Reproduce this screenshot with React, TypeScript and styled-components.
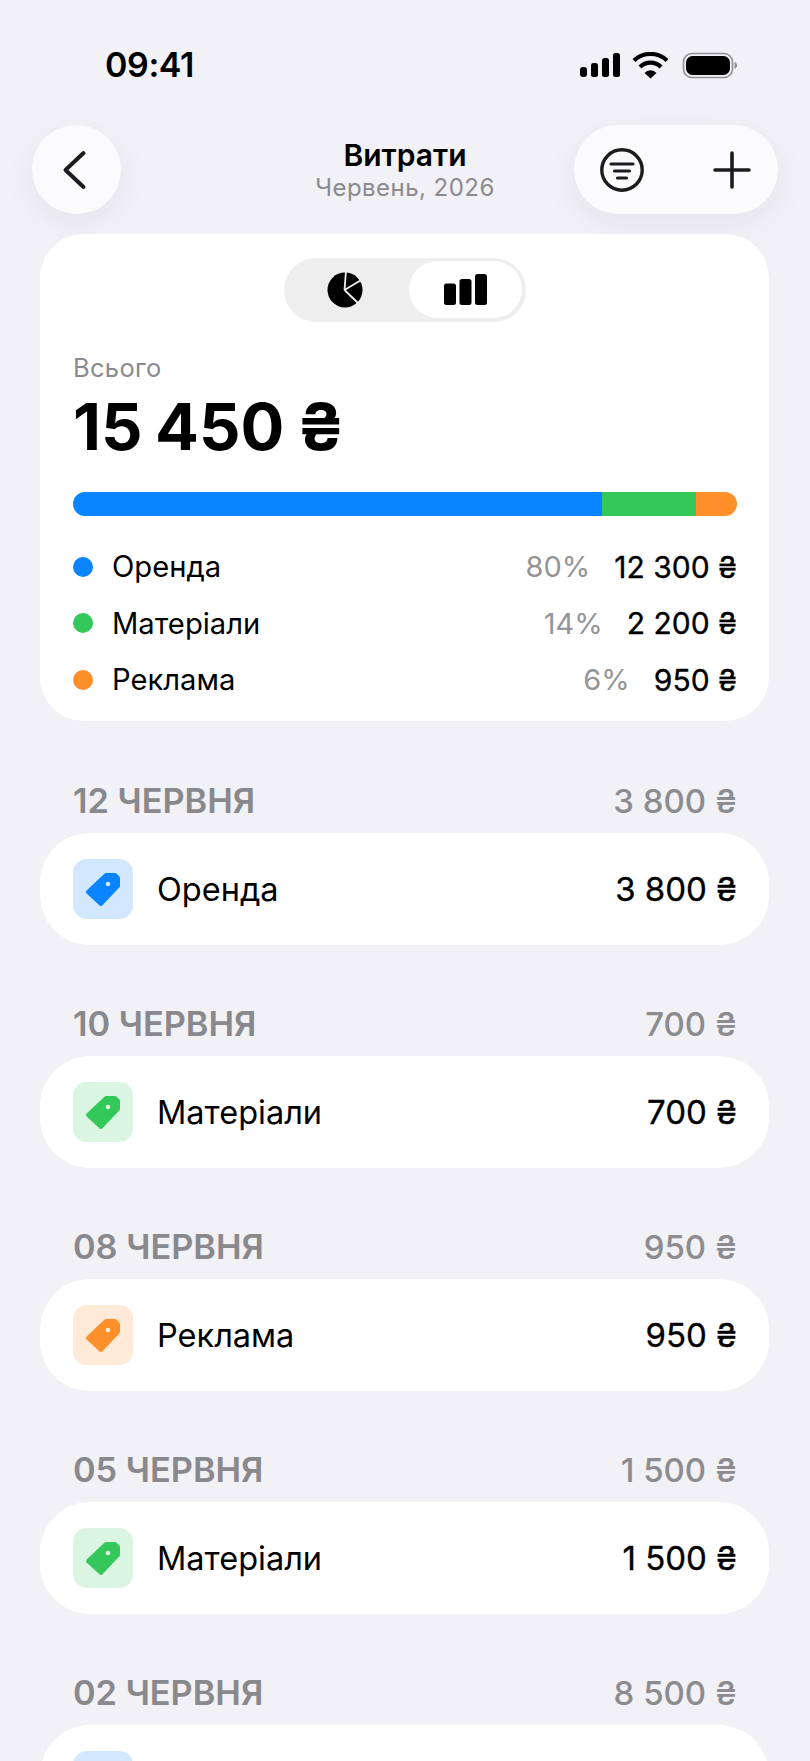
import React from "react";
import styled, { createGlobalStyle } from "styled-components";

const Global = createGlobalStyle`
  html, body { margin: 0; padding: 0; background: #f1f1f6; }
  body { font-family: Inter, "Noto Sans", sans-serif; color: #000; -webkit-font-smoothing: antialiased; }
`;
const Page = styled.div`
  width: 810px; height: 1761px; overflow: hidden; background: #f1f1f6;
  display: flex; flex-direction: column;
`;
const StatusBar = styled.div`
  flex: none; height: 125px; box-sizing: border-box; padding: 44px 72px 0 105px;
  display: flex; justify-content: space-between; align-items: flex-start;
`;
const Time = styled.div`
  font-size: 34px; font-weight: 600; line-height: 42px; letter-spacing: -0.4px;
`;
const StatusIcons = styled.svg`
  display: block; margin-top: 8px;
`;
const Header = styled.header`
  flex: none; display: grid; grid-template-columns: 1fr auto 1fr; align-items: center;
  padding: 0 32px; height: 89px;
`;
const RoundButton = styled.div`
  width: 89px; height: 89px; border-radius: 50%; background: #fbfbfe;
  box-shadow: 0 10px 34px rgba(40, 40, 70, 0.06);
  display: flex; align-items: center; justify-content: center;
`;
const ActionPill = styled.div`
  justify-self: end; width: 204px; height: 89px; border-radius: 45px; background: #fbfbfe;
  box-shadow: 0 10px 34px rgba(40, 40, 70, 0.06);
  display: flex; align-items: center; justify-content: space-between; padding: 0 26px; box-sizing: border-box;
`;
const TitleBlock = styled.div`
  text-align: center;
`;
const Title = styled.div`
  font-size: 30px; font-weight: 600; line-height: 34px;
`;
const Subtitle = styled.div`
  margin-top: 2px; font-size: 24px; line-height: 27px; color: #8a8a8f; letter-spacing: 0.45px;
`;
const Card = styled.section`
  flex: none; margin: 20px 41px 0 40px; background: #fff; border-radius: 44px;
  padding: 24px 32px 13px 33px; height: 487px; box-sizing: border-box;
  display: flex; flex-direction: column;
`;
const Toggle = styled.div`
  align-self: center; width: 242px; height: 64px; border-radius: 32px; background: #eeeeef;
  display: grid; grid-template-columns: 125px 1fr; align-items: center; padding-right: 4px; box-sizing: border-box;
`;
const ToggleSlot = styled.div<{ $active?: boolean }>`
  height: 57px; border-radius: 29px; display: flex; align-items: center; justify-content: center;
  background: ${(p) => (p.$active ? "#fff" : "transparent")};
`;
const PieIcon = styled.svg`
  margin-right: 4px;
`;
const TotalLabel = styled.div`
  margin-top: 31px; font-size: 25.5px; line-height: 30px; color: #8a8a8f; letter-spacing: 0.3px;
`;
const TotalValue = styled.div`
  margin-top: 6px; font-size: 65px; font-weight: 700; line-height: 76px; word-spacing: -3px;
`;
const Bar = styled.div`
  margin-top: 27px; height: 24px; border-radius: 12px; overflow: hidden; display: flex; flex: none;
`;
const BarPart = styled.div<{ $color: string }>`
  background: ${(p) => p.$color};
`;
const Legend = styled.div`
  margin-top: 23px;
`;
const LegendRow = styled.div`
  height: 56.5px; display: flex; align-items: center;
`;
const Dot = styled.span<{ $color: string }>`
  width: 20px; height: 20px; border-radius: 50%; background: ${(p) => p.$color}; margin-right: 19px;
`;
const LegendName = styled.span`
  flex: 1; font-size: 29.2px;
`;
const Pct = styled.span`
  font-size: 29px; color: #949497; margin-right: 24px;
`;
const LegendAmount = styled.span`
  font-size: 30px; font-weight: 400; -webkit-text-stroke: 0.35px #000;
`;
const DaySection = styled.section`
  margin: 60px 41px 0 40px; flex: none;
`;
const DayHead = styled.div`
  height: 39px; margin: 0 32px 13px 33px; display: flex; justify-content: space-between; align-items: center;
  font-size: 34.3px; font-weight: 600; color: #88888d;
`;
const DayTotal = styled.span`
  font-size: 33px; font-weight: 500; color: #8c8c90;
`;
const Row = styled.div`
  height: 112px; border-radius: 50px; background: #fff; box-sizing: border-box; padding: 0 32px 0 33px;
  display: flex; align-items: center; margin-bottom: -1px;
`;
const Tile = styled.div<{ $bg: string }>`
  width: 60px; height: 60px; border-radius: 14px; background: ${(p) => p.$bg}; flex: none;
`;
const RowName = styled.span`
  flex: 1; margin-left: 24px; font-size: 32.5px;
`;
const RowAmount = styled.span`
  font-size: 33px; font-weight: 400; -webkit-text-stroke: 0.35px #000;
`;

const BLUE = "#0a84ff", GREEN = "#34c759", ORANGE = "#ff8f2b";
const legend = [
  { name: "Оренда", pct: "80%", amount: "12 300 ₴", color: BLUE, w: 79.6 },
  { name: "Матеріали", pct: "14%", amount: "2 200 ₴", color: GREEN, w: 14.3 },
  { name: "Реклама", pct: "6%", amount: "950 ₴", color: ORANGE, w: 6.1 },
];
const tones: Record<string, { bg: string; fg: string }> = {
  Оренда: { bg: "#d2e8ff", fg: BLUE },
  Матеріали: { bg: "#daf5e1", fg: GREEN },
  Реклама: { bg: "#ffe9d7", fg: ORANGE },
};
const days = [
  { date: "12 ЧЕРВНЯ", total: "3 800 ₴", name: "Оренда" },
  { date: "10 ЧЕРВНЯ", total: "700 ₴", name: "Матеріали" },
  { date: "08 ЧЕРВНЯ", total: "950 ₴", name: "Реклама" },
  { date: "05 ЧЕРВНЯ", total: "1 500 ₴", name: "Матеріали" },
  { date: "02 ЧЕРВНЯ", total: "8 500 ₴", name: "Оренда" },
];

const TagTile = ({ name }: { name: string }) => {
  const t = tones[name];
  return (
    <Tile $bg={t.bg}>
      <svg width="60" height="60" viewBox="0 0 60 60">
        <path d="M33 16h9l3 3v8L28 45 15 33z" fill={t.fg} stroke={t.fg} strokeWidth="4" strokeLinejoin="round" />
        <circle cx="35" cy="25" r="2.3" fill={t.bg} />
      </svg>
    </Tile>
  );
};

export default function App() {
  return (
    <Page>
      <Global />
      <StatusBar>
        <Time>09:41</Time>
        <StatusIcons width="158" height="28" viewBox="0 0 158 28">
          <rect x="0" y="15" width="7" height="10" rx="3" />
          <rect x="11" y="11" width="7" height="14" rx="2.5" />
          <rect x="22" y="6" width="7" height="19" rx="2.5" />
          <rect x="33" y="1" width="7" height="24" rx="2.5" />
          <path d="M54 8.5a24 24 0 0 1 33 0" fill="none" stroke="#000" strokeWidth="4.2" strokeLinecap="butt" />
          <path d="M60 15a15 15 0 0 1 21 0" fill="none" stroke="#000" strokeWidth="4.2" />
          <path d="M64.5 21a8 8 0 0 1 12 0l-6 5.6z" />
          <rect x="103.5" y="1.5" width="49" height="24" rx="8.5" fill="none" stroke="#8e8e93" strokeWidth="1.6" />
          <rect x="106" y="4" width="44" height="19" rx="6.5" />
          <path d="M154.5 10v7c1.6-.6 2.6-2 2.6-3.5s-1-2.9-2.6-3.5z" fill="#8e8e93" />
        </StatusIcons>
      </StatusBar>
      <Header>
        <RoundButton>
          <svg width="30" height="44" viewBox="0 0 30 44">
            <path d="M21.5 5 3.5 22l18 17" fill="none" stroke="#1c1c1e" strokeWidth="4" strokeLinecap="round" strokeLinejoin="round" />
          </svg>
        </RoundButton>
        <TitleBlock>
          <Title>Витрати</Title>
          <Subtitle>Червень, 2026</Subtitle>
        </TitleBlock>
        <ActionPill>
          <svg width="44" height="44" viewBox="0 0 44 44" fill="none" stroke="#1c1c1e" strokeLinecap="round">
            <circle cx="22" cy="22" r="20.2" strokeWidth="3.4" />
            <path d="M11 16h22M14.5 23h15M17.5 30h9" strokeWidth="3.2" />
          </svg>
          <svg width="40" height="40" viewBox="0 0 40 40" fill="none" stroke="#1c1c1e" strokeLinecap="round">
            <path d="M20 3v34M3 20h34" strokeWidth="3.6" />
          </svg>
        </ActionPill>
      </Header>
      <Card>
        <Toggle>
          <ToggleSlot>
            <PieIcon width="36" height="36" viewBox="0 0 36 36">
              <circle cx="18" cy="18" r="17.5" />
              <path d="M17.5 18 19-1M17.5 18 36 7M17.5 18 32 32" stroke="#eeeeef" strokeWidth="1.8" fill="none" />
            </PieIcon>
          </ToggleSlot>
          <ToggleSlot $active>
            <svg width="43" height="31" viewBox="0 0 43 31">
              <rect x="0" y="9.5" width="12" height="21.5" rx="2.5" />
              <rect x="15.5" y="5" width="12" height="26" rx="2.5" />
              <rect x="31" y="0" width="12" height="31" rx="2.5" />
            </svg>
          </ToggleSlot>
        </Toggle>
        <TotalLabel>Всього</TotalLabel>
        <TotalValue>15 450 ₴</TotalValue>
        <Bar>
          {legend.map((l) => (
            <BarPart key={l.name} $color={l.color} style={{ width: `${l.w}%` }} />
          ))}
        </Bar>
        <Legend>
          {legend.map((l) => (
            <LegendRow key={l.name}>
              <Dot $color={l.color} />
              <LegendName>{l.name}</LegendName>
              <Pct>{l.pct}</Pct>
              <LegendAmount>{l.amount}</LegendAmount>
            </LegendRow>
          ))}
        </Legend>
      </Card>
      {days.map((d) => (
        <DaySection key={d.date}>
          <DayHead>
            <span>{d.date}</span>
            <DayTotal>{d.total}</DayTotal>
          </DayHead>
          <Row>
            <TagTile name={d.name} />
            <RowName>{d.name}</RowName>
            <RowAmount>{d.total}</RowAmount>
          </Row>
        </DaySection>
      ))}
    </Page>
  );
}
